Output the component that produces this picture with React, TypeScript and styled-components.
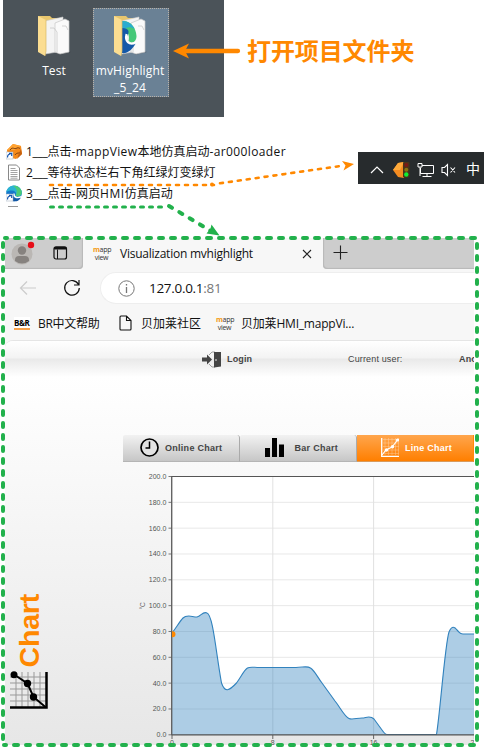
import React from "react";
import styled, { createGlobalStyle } from "styled-components";

const GlobalStyle = createGlobalStyle`
  * { box-sizing: border-box; }
  body { margin: 0; background: #fff; overflow: hidden; }
  svg { display: block; flex: none; }
`;

const ui = `"Open Sans", "Noto Sans CJK SC", sans-serif`;
const hmi = `"Liberation Sans", Arial, sans-serif`;

const Page = styled.main`
  position: relative;
  width: 484px;
  height: 748px;
  overflow: hidden;
  font-family: ${ui};
  color: #000;
`;

const Label = styled.span<{ $size?: number; $track?: number; $color?: string }>`
  font-size: ${(p) => p.$size ?? 12}px;
  letter-spacing: ${(p) => p.$track ?? 0}px;
  color: ${(p) => p.$color ?? "#111"};
  white-space: nowrap;
`;
const Tracked = styled.span<{ $track: number }>`
  letter-spacing: ${(p) => p.$track}px;
`;

const TopRow = styled.section`
  display: flex;
  height: 117px;
  padding-left: 3px;
`;
const Desktop = styled.div`
  display: flex;
  width: 221px;
  padding: 8px 0 0 14px;
  background: #4b5359;
`;
const FolderTile = styled.div<{ $selected?: boolean }>`
  display: flex;
  flex-direction: column;
  align-items: center;
  width: 76px;
  height: 89px;
  padding: 5px 2px 0 0;
  color: #fff;
  font-size: 12px;
  line-height: 17px;
  text-align: center;
  background: ${(p) => (p.$selected ? "#6a8195" : "transparent")};
  border: 1px ${(p) => (p.$selected ? "dotted #b9b1a8" : "solid transparent")};
`;
const FolderName = styled.span<{ $track: number }>`
  margin-top: 4px;
  letter-spacing: ${(p) => p.$track}px;
  white-space: pre;
`;
const Headline = styled.h1`
  margin: 33px 0 0 23px;
  font: 700 24px/34px "Noto Sans CJK SC", sans-serif;
  letter-spacing: -0.1px;
  color: #ff8800;
`;

const MiddleRow = styled.section`
  display: flex;
  justify-content: space-between;
  height: 121px;
  padding-top: 24px;
`;
const FileList = styled.div`
  padding-left: 6px;
`;
const FileRow = styled.div`
  display: flex;
  align-items: center;
  gap: 4px;
  height: 21px;
  line-height: 21px;
`;
const Tray = styled.div`
  display: grid;
  grid-template-columns: 26px 24px 24px 22px 26px;
  align-items: center;
  justify-items: center;
  width: 126px;
  height: 32px;
  margin-top: 11px;
  padding: 3px 0 0 6px;
  background: #272b2d;
  color: #fff;
`;
const InputMode = styled(Label)`
  margin-top: -3px;
`;

const Browser = styled.section`
  width: 469px;
  height: 507px;
  margin-left: 5px;
  background: #f7f7f7;
  overflow: hidden;
`;
const TabStrip = styled.div`
  display: flex;
  height: 31px;
  background: #f7f7f7;
`;
const StripLeft = styled.div`
  display: flex;
  gap: 18px;
  width: 78px;
  padding: 2px 0 0 5px;
  background: #cdcdcd;
  border-radius: 0 0 4px 0;
  box-shadow: inset -1px -1px 1px #b8b8b8;
`;
const ActiveTab = styled.div`
  display: flex;
  align-items: center;
  width: 240px;
  padding-left: 10px;
`;
const TabTitle = styled(Label)`
  width: 182px;
  margin-left: 10px;
`;
const StripRight = styled.div`
  flex: 1;
  padding: 7px 0 0 10px;
  background: #cdcdcd;
  border-radius: 0 0 0 4px;
  box-shadow: inset 1px -1px 1px #b8b8b8;
`;
const Toolbar = styled.div`
  display: flex;
  align-items: center;
  gap: 26px;
  height: 38px;
  padding-left: 14px;
`;
const Address = styled.div`
  display: flex;
  align-items: center;
  gap: 14px;
  flex: 1;
  height: 32px;
  margin-left: -7px;
  padding-left: 17px;
  background: #fff;
  border: 1px solid #eee;
  border-right: 0;
  border-radius: 16px 0 0 16px;
`;
const Bookmarks = styled.div`
  display: flex;
  align-items: center;
  height: 33px;
  padding: 0 0 1px 9px;
`;
const Bookmark = styled.div<{ $width: number; $gap: number }>`
  display: flex;
  align-items: center;
  gap: ${(p) => p.$gap}px;
  width: ${(p) => p.$width}px;
`;
const BrMark = styled.span`
  width: 16px;
  height: 13px;
  background: #fff;
  border-bottom: 2px solid #f7a24a;
  font: 700 8px/12px "Open Sans", sans-serif;
  letter-spacing: -0.5px;
`;
const MappMark = styled.span`
  width: 17px;
  height: 17px;
  margin-top: 2px;
  font: 400 7px/8px "Open Sans", sans-serif;
  letter-spacing: -0.3px;
  color: #333;
  text-align: center;
  b { color: #f39a12; font-weight: 700; }
`;

const Hmi = styled.div`
  height: 405px;
  border-top: 1px solid #e5e5e5;
  border-radius: 8px 0 0 0;
  background: linear-gradient(#fff 0, #fff 35px, #e7e7e7 400px);
  font-family: ${hmi};
  color: #444;
`;
const HmiHeader = styled.div`
  display: flex;
  align-items: center;
  height: 36px;
  padding-left: 197px;
  border-radius: 8px 0 0 0;
  background: linear-gradient(#fff 0, #f3f3f3 17px, #e9e9e9 18px, #fff 36px);
`;
const HmiText = styled.span<{ $bold?: boolean; $width?: number; $track?: number }>`
  flex: none;
  width: ${(p) => (p.$width ? `${p.$width}px` : "auto")};
  font-size: 9px;
  font-weight: ${(p) => (p.$bold ? 700 : 400)};
  white-space: nowrap;
  letter-spacing: ${(p) => p.$track ?? 0.15}px;
`;
const HmiTabs = styled.div`
  display: flex;
  width: 351px;
  height: 27px;
  margin: 58px 0 -1px 118px;
`;
const HmiTab = styled.div<{ $active?: boolean; $pad: number }>`
  display: flex;
  align-items: center;
  gap: 6px;
  width: 117px;
  padding: 0 0 1px ${(p) => p.$pad}px;
  border-right: 1px solid ${(p) => (p.$active ? "#ff8a0a" : "#aaa")};
  border-bottom: 1px solid ${(p) => (p.$active ? "#d99a5b" : "#b5b5b5")};
  border-radius: ${(p) => (p.$active ? "0" : "2px 3px 0 0")};
  background: ${(p) =>
    p.$active ? "linear-gradient(#ffa64d, #ff7f00)" : "linear-gradient(#f2f2f2, #c6c6c6)"};
  color: ${(p) => (p.$active ? "#fff" : "#444")};
`;
const HmiBody = styled.div`
  display: flex;
  height: 285px;
`;
const SideTitle = styled.aside`
  display: flex;
  flex-direction: column;
  justify-content: flex-end;
  width: 118px;
  height: 248px;
  padding-left: 5px;
`;
const VerticalName = styled.span`
  margin: 0 0 4px 3px;
  writing-mode: vertical-rl;
  transform: rotate(180deg);
  align-self: flex-start;
  font-size: 28.5px;
  line-height: 32px;
  font-weight: 700;
  color: #ff8800;
  letter-spacing: -0.2px;
`;
const Annotations = styled.svg`
  position: absolute;
  inset: 0;
  pointer-events: none;
`;

const Folder = ({ edge }: { edge?: boolean }) => (
  <svg width="36" height="44" viewBox="0 0 36 44">
    <path d="M23 41l12-3-9-3z" fill="#30383d" opacity=".4" />
    <path d="M2 2h12l2 2h9v32H2z" fill="#e8c66e" />
    <path d="M9 7l18-4v34l-18 3z" fill="#f4f4f4" stroke="#cfcfcf" strokeWidth=".6" />
    <path d="M19 9l10-4 4 2v31l-9 2-5-2z" fill="#fafafa" stroke="#c6c6c6" strokeWidth=".7" />
    <path d="M26 12h4l2 4M14 14h4l3 4v20" fill="none" stroke="#c9c9c9" strokeWidth=".8" />
    {edge && (
      <>
        <path d="M10 7C18 6 24 13 24.500 22C24.500 28 20 30 16.500 27C18 22 16 17 10 14z" fill="#45c878" />
        <path d="M10 7C16 6.500 21 11 22.500 15C18 12 14 13 10 18z" fill="#2aabd0" />
        <path d="M10 14C17 14 18 18 15 22C14 27 17 31 24 29C20 36 15 40 10 39z" fill="#1459a8" />
        <path d="M14.500 20C12.500 27 17 32 24 28.500" fill="none" stroke="#fff" strokeWidth="2" />
      </>
    )}
    <path d="M2 2l8 4v31l-1 5-7-4z" fill="#fbdd91" />
    <path d="M10 6v31l-1 5" fill="none" stroke="#d7b765" strokeWidth=".7" />
  </svg>
);

const ShortcutArrow = () => (
  <>
    <rect x="0" y="9" width="7" height="7" fill="#fff" stroke="#9aaabd" strokeWidth=".5" />
    <path d="M1.500 14.500c0-3 1-3.500 3-3.500M3 10.300h2.700v2.800" fill="none" stroke="#1656b0" strokeWidth="1.200" />
  </>
);
const LoaderIcon = () => (
  <svg width="16" height="18" viewBox="0 0 16 18">
    <path d="M1 7l6-6 8 2 1 8-6 5-8-2z" fill="#f58a1a" />
    <path d="M1 7l6-6 8 2-6 4z" fill="#ffa332" />
    <path d="M4 7c3-4 4 0 7-2 2-1 2 1 3 0M9 12c2-3 4-1 5-3" fill="none" stroke="#7b3d10" strokeWidth="1" />
    <path d="M11 16l5-5-1-5-2 4z" fill="#c7620f" />
    <ShortcutArrow />
  </svg>
);
const TextFileIcon = () => (
  <svg width="16" height="17" viewBox="0 0 16 17">
    <path d="M2.500 1h8l3 3v12h-11z" fill="#fff" stroke="#888" strokeWidth="1" />
    <path d="M4.500 4.500h5M4.500 6.500h7M4.500 8.500h7M4.500 10.500h7M4.500 12.500h7M4.500 14.200h7" stroke="#999" strokeWidth=".9" />
  </svg>
);
const EdgeIcon = () => (
  <svg width="16" height="17" viewBox="0 0 16 17">
    <circle cx="8" cy="8.500" r="7.800" fill="#1478cc" />
    <path d="M.3 7.500C1-1.500 15-2 15.800 7.500C15.800 12 10.500 12 9.500 10.500C11 8 9 5.500 6 5.500C3.500 5.500 1.300 6 .3 7.500z" fill="#2bb3d3" />
    <path d="M7 .8C12 .3 15.800 4 15.800 7.500C15.800 12 10.500 12 9.500 10.500C11.500 7 11.500 4 7 .8z" fill="#4ccb78" />
    <path d="M6.500 8C5.500 13 10 15 15 12.500C13 16 10 17 6.500 16C3 14 3.500 10 6.500 8z" fill="#1357a5" />
    <path d="M8 8.500C7.500 12.500 11 13.500 15.500 11.700" fill="none" stroke="#fff" strokeWidth="1.400" />
    <ShortcutArrow />
  </svg>
);
const MappIcon = () => (
  <MappMark>
    <b>m</b>app
    <br />
    view
  </MappMark>
);

const LineChartIcon = ({ color }: { color: string }) => (
  <svg width="18" height="19" viewBox="0 0 18 19">
    <path d="M2 1.500h16M2 5h16M2 8.500h16M2 12h16M2 15.500h16M4 0v17M7.500 0v17M11 0v17M14.500 0v17M17.500 0v17" stroke={color} strokeWidth=".5" opacity=".5" />
    <path d="M.7 0v18.300H18" fill="none" stroke={color} strokeWidth="1.300" />
    <path d="M1 17l4-5 6-3 4-5 2-3" fill="none" stroke={color} strokeWidth="1.200" />
    <g fill={color}>
      <circle cx="5.500" cy="12" r="1.700" />
      <circle cx="11.500" cy="8.700" r="1.700" />
      <circle cx="16.500" cy="2" r="1.600" />
    </g>
  </svg>
);

const PLOT = { left: 49, top: 15.5, width: 303, step: 25.83 };
const yTicks = [200, 180, 160, 140, 120, 100, 80, 60, 40, 20, 0];
const xTicks = [0, 8, 16, 24];
const curve =
  "M172 633C176 628 180 621 183 618C187 614 192 617 197 617C201 616 203 611 207 613C213 615 216 653 221.500 683C225 693 229 691 236.500 683C241 677 244 670 247.500 668C250 666.500 254 667.500 259 667.500H296C303 667.500 307 665.500 310.500 668C315 671 318 678 322 683L335 701C340 707 344 716 349 718.500C352 720 357 718 362 718C366 718 370 715 374 719L382 730Q385 734.500 387 734.500H436.500C440 714 445 644 449 632C452 625 455 627 457 630C460 633 460 634 463 634H475";

const TrendChart = () => (
  <svg width="351" height="285" viewBox="0 0 351 285" fontFamily="Liberation Sans, Arial, sans-serif">
    <rect x={PLOT.left} y={PLOT.top} width={PLOT.width} height="258.300" fill="#fff" />
    {yTicks.map((t, i) => {
      const y = PLOT.top + i * PLOT.step;
      return (
        <g key={t}>
          <path d={`M${PLOT.left} ${y}H351`} stroke="#e8e8e8" />
          <path d={`M45.500 ${y}H49`} stroke="#777" />
          <text x="43.300" y={y + 2.5} textAnchor="end" fontSize="7" fill="#555">
            {t.toFixed(1)}
          </text>
        </g>
      );
    })}
    {xTicks.map((t) => (
      <g key={t}>
        <path d={`M${PLOT.left + t * 12.6} 15V274`} stroke="#e1e1e1" />
        <path d={`M${PLOT.left + t * 12.6} 274v4`} stroke="#666" />
        <text x={PLOT.left + t * 12.6} y="283.500" textAnchor="middle" fontSize="7" fill="#555">
          {t}
        </text>
      </g>
    ))}
    <g transform="translate(-123 -461)">
      <path d={`${curve}V735H172Z`} fill="#3182bd" opacity=".4" />
      <path d={curve} fill="none" stroke="#3182bd" strokeWidth="1.100" />
    </g>
    <path d="M48.700 15.500H351M48.700 273.800H351M48.700 15V274" fill="none" stroke="#555" strokeWidth="1.200" />
    <path d="M49 170.300h.5a3 3 0 0 1 0 6h-.5z" fill="#ff8800" />
    <text transform="translate(22 148.500) rotate(-90)" fontSize="6.500" fill="#666">
      °C
    </text>
  </svg>
);

export default function App() {
  return (
    <Page>
      <GlobalStyle />
      <TopRow>
        <Desktop>
          <FolderTile>
            <Folder />
            <FolderName $track={0.1}>Test</FolderName>
          </FolderTile>
          <FolderTile $selected>
            <Folder edge />
            <FolderName $track={0.15}>{"mvHighlight\n_5_24"}</FolderName>
          </FolderTile>
        </Desktop>
        <Headline>打开项目文件夹</Headline>
      </TopRow>

      <MiddleRow>
        <FileList>
          <FileRow>
            <LoaderIcon />
            <Label>
              <Tracked $track={-0.3}>1___</Tracked>点击
              <Tracked $track={0.38}>-mappView</Tracked>本地仿真启动
              <Tracked $track={0.38}>-ar000loader</Tracked>
            </Label>
          </FileRow>
          <FileRow>
            <TextFileIcon />
            <Label>
              <Tracked $track={-0.3}>2___</Tracked>等待状态栏右下角红绿灯变绿灯
            </Label>
          </FileRow>
          <FileRow>
            <EdgeIcon />
            <Label>
              <Tracked $track={-0.3}>3___</Tracked>点击
              <Tracked $track={0.6}>-</Tracked>网页
              <Tracked $track={0.6}>HMI</Tracked>仿真启动
            </Label>
          </FileRow>
        </FileList>
        <Tray>
          <svg width="14" height="10" viewBox="0 0 14 10">
            <path d="M1 8l6-6 6 6" fill="none" stroke="#fff" strokeWidth="1.200" />
          </svg>
          <svg width="18" height="18" viewBox="0 0 18 18">
            <path d="M0 9l5-7 6-1v16l-6-1z" fill="#f48b20" />
            <path d="M0 9l5-7 6-1-4 8z" fill="#ffaa3b" />
            <rect x="10" y="1" width="6.500" height="15.500" rx="1" fill="#493419" />
            <circle cx="13.300" cy="4" r="2" fill="#7b1916" />
            <circle cx="13.300" cy="8.700" r="2" fill="#8a7411" />
            <circle cx="13.300" cy="13.500" r="2.200" fill="#12ed32" />
          </svg>
          <svg width="18" height="16" viewBox="0 0 18 16">
            <path d="M5 3.500h11.500v8H3.500V6M10 12v2M5.500 14.500h9M1 1.500h4v3.500H1zM3 5v9" fill="none" stroke="#fff" strokeWidth="1" />
          </svg>
          <svg width="16" height="14" viewBox="0 0 16 14">
            <path d="M1 4.500h2.500L6.500 1.500v11L3.500 9.500H1zM9.500 4.500l4.500 5M14 4.500l-4.500 5" fill="none" stroke="#fff" strokeWidth="1.100" />
          </svg>
          <InputMode $size={14} $color="#fff">中</InputMode>
        </Tray>
      </MiddleRow>

      <Browser>
        <TabStrip>
          <StripLeft>
            <svg width="25" height="26" viewBox="0 0 25 26">
              <circle cx="12" cy="14" r="10.500" fill="#bab7b4" />
              <circle cx="12" cy="10.500" r="4.200" fill="#86827f" />
              <path d="M5 21v-1q0-4 4-4h6q4 0 4 4v1q-7 5-14 0z" fill="#86827f" />
              <circle cx="21" cy="5" r="3.200" fill="#e60d18" />
            </svg>
            <svg width="15" height="26" viewBox="0 0 15 26">
              <rect x="1" y="6.800" width="12.500" height="12.200" rx="2" fill="none" stroke="#111" strokeWidth="1.200" />
              <path d="M1.500 7.500h11.500v1.500H1.500zM4.500 9.500V19" fill="#111" stroke="#111" />
            </svg>
          </StripLeft>
          <ActiveTab>
            <MappIcon />
            <TabTitle $track={-0.24}>Visualization mvhighlight</TabTitle>
            <svg width="10" height="10" viewBox="0 0 10 10">
              <path d="M1 1l8 8M9 1L1 9" stroke="#222" strokeWidth="1.100" />
            </svg>
          </ActiveTab>
          <StripRight>
            <svg width="15" height="15" viewBox="0 0 15 15">
              <path d="M.5 7.500h14M7.500 .5v14" stroke="#222" strokeWidth="1.100" />
            </svg>
          </StripRight>
        </TabStrip>
        <Toolbar>
          <svg width="18" height="16" viewBox="0 0 18 16">
            <path d="M17 8H2M8 1.500L1.500 8 8 14.500" fill="none" stroke="#ccc" strokeWidth="1.200" />
          </svg>
          <svg width="18" height="18" viewBox="0 0 18 18">
            <path d="M15.500 5.500A7.300 7.300 0 1 0 16.300 9M16 1v5h-5" fill="none" stroke="#111" strokeWidth="1.200" />
          </svg>
          <Address>
            <svg width="17" height="17" viewBox="0 0 17 17">
              <circle cx="8.500" cy="8.500" r="7.700" fill="none" stroke="#777" strokeWidth="1" />
              <path d="M8.500 7v6M8.500 4v1.500" stroke="#777" strokeWidth="1.300" />
            </svg>
            <Label $size={13.5} $track={-0.3}>
              127.0.0.1<Label $size={13.5} $track={-0.3} $color="#777">:81</Label>
            </Label>
          </Address>
        </Toolbar>
        <Bookmarks>
          <Bookmark $width={105} $gap={8}>
            <BrMark>B&amp;R</BrMark>
            <Label $track={-0.3}>BR中文帮助</Label>
          </Bookmark>
          <Bookmark $width={97} $gap={9}>
            <svg width="13" height="16" viewBox="0 0 13 16">
              <path d="M1 2q0-1 1-1h5.500L12 5.500V14q0 1-1 1H2q-1 0-1-1zM7.500 1v4.500H12" fill="none" stroke="#111" strokeWidth="1.100" />
            </svg>
            <Label>贝加莱社区</Label>
          </Bookmark>
          <Bookmark $width={150} $gap={8}>
            <MappIcon />
            <Label $track={-0.2}>贝加莱HMI_mappVi...</Label>
          </Bookmark>
        </Bookmarks>
        <Hmi>
          <HmiHeader>
            <svg width="25" height="17" viewBox="0 0 25 17">
              <path d="M0 6.500h5V3.500L10 8.500l-5 5V10.500H0z" fill="#444" />
              <path d="M7 4l3-3h3M7 13l3 3h3" fill="none" stroke="#888" strokeWidth=".8" />
              <path d="M12 1l7 0v14.500L12 16.500z" fill="#444" />
              <circle cx="14" cy="9" r=".8" fill="#fff" />
            </svg>
            <HmiText $bold $width={121}>Login</HmiText>
            <HmiText $width={111}>Current user:</HmiText>
            <HmiText $bold>Anonymous</HmiText>
          </HmiHeader>
          <HmiTabs>
            <HmiTab $pad={17}>
              <svg width="19" height="19" viewBox="0 0 19 19">
                <circle cx="9.500" cy="9.500" r="8.500" fill="#e3e3e3" stroke="#000" strokeWidth="1.700" />
                <path d="M9.500 3.500v6.500H5.500" fill="none" stroke="#000" strokeWidth="1.500" />
              </svg>
              <HmiText $bold $track={0.28}>Online Chart</HmiText>
            </HmiTab>
            <HmiTab $pad={23.5}>
              <svg width="25" height="20" viewBox="0 0 25 20">
                <path d="M1 10h5v9H1zM8 0h5v19H8zM15 6.500h5V19h-5z" />
              </svg>
              <HmiText $bold $track={0.28}>Bar Chart</HmiText>
            </HmiTab>
            <HmiTab $active $pad={24}>
              <LineChartIcon color="#fff" />
              <HmiText $bold $track={0.25}>Line Chart</HmiText>
            </HmiTab>
          </HmiTabs>
          <HmiBody>
            <SideTitle>
              <VerticalName>Chart</VerticalName>
              <svg width="38" height="38" viewBox="0 0 38 38">
                <path d="M0 6h36M0 12h36M0 18h36M0 24h36M0 30h36M6 1v35M12 1v35M18 1v35M24 1v35M30 1v35" stroke="#999" strokeWidth="1" />
                <path d="M0 36.500h36.500V1" fill="none" stroke="#000" strokeWidth="2.500" />
                <path d="M4 3.500L17.500 12.500 23.500 26 36 36.500" fill="none" stroke="#000" strokeWidth="2" />
                <circle cx="4" cy="3.700" r="3.500" />
                <circle cx="17.500" cy="12.500" r="3.700" />
                <circle cx="23.500" cy="26" r="3.700" />
              </svg>
            </SideTitle>
            <TrendChart />
          </HmiBody>
        </Hmi>
      </Browser>

      <Annotations width="484" height="748" viewBox="0 0 484 748" fill="none">
        <path d="M8 206.500h10" stroke="#999" />
        <g stroke="#ff8800">
          <path d="M184 51h54" strokeWidth="4.300" strokeLinecap="round" />
          <path d="M173 51l16-7.500-4 7.500 4 7.500z" fill="#ff8800" stroke="none" />
          <path d="M50 185H214" strokeWidth="2.600" strokeDasharray="3 6" strokeLinecap="round" />
          <path d="M220 183.300L344 165.500" strokeWidth="2.600" strokeDasharray="3 6" strokeLinecap="round" />
          <path d="M354 164l-12-3 3.500 4.500-2 5z" fill="#ff8800" stroke="none" />
          <circle cx="212" cy="184.500" r="2" fill="#ff8800" stroke="none" />
        </g>
        <g stroke="#22b14c">
          <path d="M50.500 207H166" strokeWidth="3" strokeDasharray="3 6" strokeLinecap="round" />
          <path d="M169 206l42 25" strokeWidth="4" strokeDasharray="3.500 8.500" strokeLinecap="round" />
          <path d="M219.500 235.500l-8-11-1 4-4 5z" fill="#22b14c" stroke="none" />
          <path d="M15 238H475" strokeWidth="4" strokeDasharray="4 8" strokeLinecap="round" />
          <path d="M5 238h2" strokeWidth="4" strokeLinecap="round" />
          <path d="M3 243V743" strokeWidth="4" strokeDasharray="4 8" strokeLinecap="round" />
          <path d="M477 244V743" strokeWidth="4" strokeDasharray="4 8" strokeLinecap="round" />
          <path d="M14 745H476" strokeWidth="4" strokeDasharray="4 8" strokeLinecap="round" />
          <path d="M4 745h2" strokeWidth="4" strokeLinecap="round" />
        </g>
      </Annotations>
    </Page>
  );
}
